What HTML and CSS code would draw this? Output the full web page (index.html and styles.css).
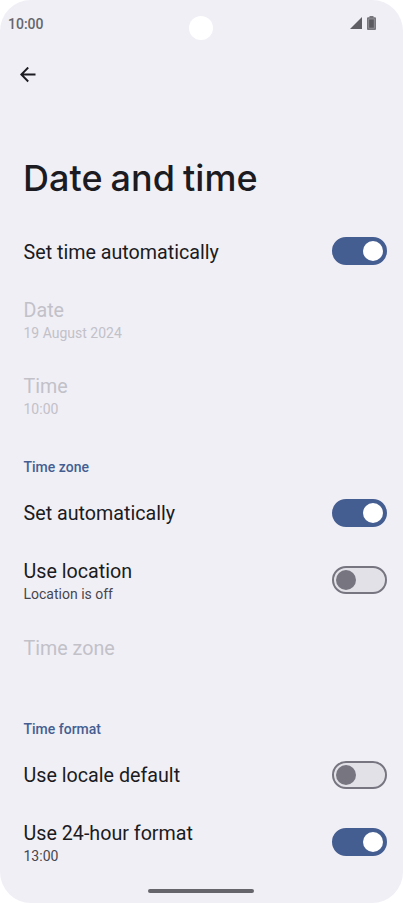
FILE: index.html
```html
<!DOCTYPE html>
<html lang="en">
<head>
<meta charset="utf-8">
<title>Date and time</title>
<link rel="stylesheet" href="styles.css">
</head>
<body>
<div class="screen">
  <header class="status">
    <span class="clock">10:00</span>
    <span class="camera"></span>
    <span class="indicators">
      <svg width="12" height="12" viewBox="0 0 12 12"><path d="M12 0v12H0z" fill="#5f5e64"/></svg>
      <svg width="9" height="14" viewBox="0 0 9 14"><path d="M2.5 0h4v1.2H8q1 0 1 1V13q0 1-1 1H1q-1 0-1-1V2.200q0-1 1-1h1.500z" fill="#77767c"/><path d="M1.700 3h5.600v9.200H1.700z" fill="#5b5a61" stroke="#aaa9af" stroke-width=".6"/></svg>
    </span>
  </header>
  <nav class="toolbar">
    <svg width="16" height="16" viewBox="0 0 16 16" fill="none" stroke="#1b1b21" stroke-width="1.900"><path d="M15.500 7.500H1.500M8.200 .5L1.300 7.500l6.900 7"/></svg>
  </nav>
  <h1>Date and time</h1>
  <main>
    <div class="row first"><div class="label">Set time automatically</div><span class="switch on"></span></div>
    <div class="row double disabled"><div class="text"><div class="label">Date</div><div class="sub">19 August 2024</div></div></div>
    <div class="row double disabled"><div class="text"><div class="label">Time</div><div class="sub">10:00</div></div></div>
    <h2>Time zone</h2>
    <div class="row"><div class="label">Set automatically</div><span class="switch on"></span></div>
    <div class="row double"><div class="text"><div class="label">Use location</div><div class="sub">Location is off</div></div><span class="switch"></span></div>
    <div class="row disabled"><div class="label">Time zone</div></div>
    <h2 class="spaced">Time format</h2>
    <div class="row"><div class="label">Use locale default</div><span class="switch"></span></div>
    <div class="row double"><div class="text"><div class="label">Use 24-hour format</div><div class="sub">13:00</div></div><span class="switch on"></span></div>
  </main>
  <footer><span class="handle"></span></footer>
</div>
</body>
</html>
```
FILE: styles.css
```css
* { box-sizing: border-box; }
body { margin: 0; background: #fff; font-family: Roboto, sans-serif; color: #1b1b21; }
.screen { width: 403px; height: 903px; background: #f0eff6; border-radius: 31px; overflow: hidden; display: flex; flex-direction: column; }
.status { height: 48px; flex: none; display: grid; grid-template-columns: 1fr 24px 1fr; align-items: center; padding: 7px 27px 0 8px; }
.clock { font-size: 14px; font-weight: 500; color: #66656b; margin-top: -7px; }
.camera { width: 24px; height: 24px; border-radius: 50%; background: #fff; margin-left: 8.500px; }
.indicators { display: flex; justify-content: flex-end; align-items: center; gap: 5px; margin-top: -9px; }
svg { display: block; }
.toolbar { height: 52px; flex: none; display: flex; align-items: center; padding: 1px 0 0 19.500px; }
h1 { margin: 0; height: 122px; flex: none; padding: 54px 0 0 23px; font: 450 36px/48px Inter, sans-serif; letter-spacing: .05px; word-spacing: -1.700px; white-space: nowrap; }
.row { height: 58px; display: flex; align-items: center; justify-content: space-between; padding: 0 15.700px 0 23.500px; }
.row.first { height: 58.500px; }
.row.double { height: 76.700px; }
.label { font-size: 19.700px; line-height: 26px; white-space: nowrap; }
.row > .label { padding-top: 3px; }
.text { padding-top: 1.500px; }
.sub { font-size: 14px; line-height: 19px; color: #47464e; white-space: nowrap; }
.text .label { line-height: 27px; }
.disabled .label, .disabled .sub { color: #c2c1c8; }
h2 { margin: 0; height: 50px; padding: 24.500px 0 0 23.500px; font-size: 14px; line-height: 19px; font-weight: 500; color: #455e91; }
h2.spaced { height: 69px; padding-top: 43.500px; }
.switch { width: 55px; height: 28px; border-radius: 14px; background: #e2e1e8; border: 2px solid #777680; display: flex; align-items: center; padding: 0 2px; flex: none; }
.switch::before { content: ""; width: 20px; height: 20px; border-radius: 50%; background: #777680; }
.switch.on { background: #455e91; border-color: #455e91; justify-content: flex-end; }
.switch.on::before { background: #fff; }
footer { margin-top: auto; height: 14px; flex: none; display: flex; justify-content: center; padding-right: 1px; }
.handle { width: 106px; height: 4px; border-radius: 2px; background: #66656b; }
```
